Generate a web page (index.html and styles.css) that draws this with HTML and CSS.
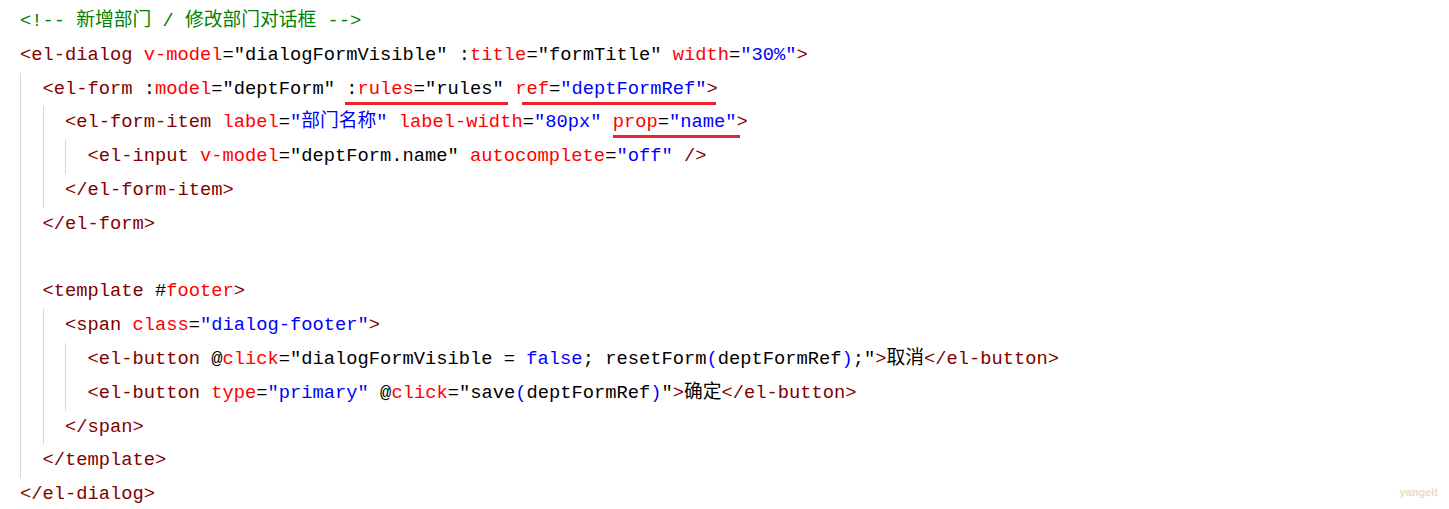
FILE: index.html
```html
<!DOCTYPE html>
<html lang="zh-CN">
  <head>
    <meta charset="UTF-8" />
    <meta name="viewport" content="width=device-width, initial-scale=1.0" />
    <title>dept dialog</title>
    <link rel="stylesheet" href="styles.css">
  </head>

  <body>
    <div id="code">
      <div class="line"><span class="c">&lt;!-- 新增部门 / 修改部门对话框 --&gt;</span></div>
      <div class="line"><span class="t">&lt;el-dialog</span> <span class="a">v-model</span>="dialogFormVisible" :<span class="a">title</span>="formTitle" <span class="a">width</span>=<span class="v">"30%"</span><span class="t">&gt;</span></div>
      <div class="block">
        <div class="line"><span class="t">&lt;el-form</span> :<span class="a">model</span>="deptForm" <span class="mark mark-rules">:<span class="a">rules</span>="rules"</span> <span class="mark mark-ref"><span class="a">ref</span>=<span class="v">"deptFormRef"</span></span><span class="t">&gt;</span></div>
        <div class="block">
          <div class="line"><span class="t">&lt;el-form-item</span> <span class="a">label</span>=<span class="v">"部门名称"</span> <span class="a">label-width</span>=<span class="v">"80px"</span> <span class="mark mark-prop"><span class="a">prop</span>=<span class="v">"name"</span></span><span class="t">&gt;</span></div>
          <div class="block">
            <div class="line"><span class="t">&lt;el-input</span> <span class="a">v-model</span>="deptForm.name" <span class="a">autocomplete</span>=<span class="v">"off"</span> <span class="t">/&gt;</span></div>
          </div>
          <div class="line"><span class="t">&lt;/el-form-item&gt;</span></div>
        </div>
        <div class="line"><span class="t">&lt;/el-form&gt;</span></div>
        <div class="line"></div>
        <div class="line"><span class="t">&lt;template</span> #<span class="a">footer</span><span class="t">&gt;</span></div>
        <div class="block">
          <div class="line"><span class="t">&lt;span</span> <span class="a">class</span>=<span class="v">"dialog-footer"</span><span class="t">&gt;</span></div>
          <div class="block">
            <div class="line"><span class="t">&lt;el-button</span> @<span class="a">click</span>="dialogFormVisible = <span class="v">false</span>; resetForm<span class="v">(</span>deptFormRef<span class="v">)</span>;"<span class="t">&gt;</span>取消<span class="t">&lt;/el-button&gt;</span></div>
            <div class="line"><span class="t">&lt;el-button</span> <span class="a">type</span>=<span class="v">"primary"</span> @<span class="a">click</span>="save<span class="v">(</span>deptFormRef<span class="v">)</span>"<span class="t">&gt;</span>确定<span class="t">&lt;/el-button&gt;</span></div>
          </div>
          <div class="line"><span class="t">&lt;/span&gt;</span></div>
        </div>
        <div class="line"><span class="t">&lt;/template&gt;</span></div>
      </div>
      <div class="line"><span class="t">&lt;/el-dialog&gt;</span></div>
    </div>
    <div class="watermark">yangeit</div>
  </body>
</html>
```

FILE: styles.css
```css
body {
  margin: 0;
  background-color: #ffffff;
}

#code {
  padding: 5px 0 0 20px;
  font-family: "Liberation Mono", "Noto Sans CJK SC", monospace;
  font-size: 18.75px;
  color: #000000;
}

.line {
  height: 33.8px;
  line-height: 33.8px;
  white-space: pre;
}

.block {
  border-left: 1px solid #d6d6d6;
  padding-left: 21.5px;
}

.c {
  color: #008000;
}

.t {
  color: #800000;
}

.a {
  color: #ff0000;
}

.v {
  color: #0000ff;
}

.mark {
  position: relative;
}

.mark::after {
  content: "";
  position: absolute;
  bottom: -5px;
  height: 3px;
  background-color: #e8232a;
}

.mark-rules::after {
  left: -1px;
  right: -4px;
}

.mark-ref::after {
  left: 7px;
  right: -10px;
}

.mark-prop::after {
  left: 0;
  right: -4px;
}

.watermark {
  position: absolute;
  right: 11px;
  bottom: 11px;
  font-family: "Liberation Sans", sans-serif;
  font-size: 11px;
  font-weight: bold;
  color: #e8dcc2;
}
```
